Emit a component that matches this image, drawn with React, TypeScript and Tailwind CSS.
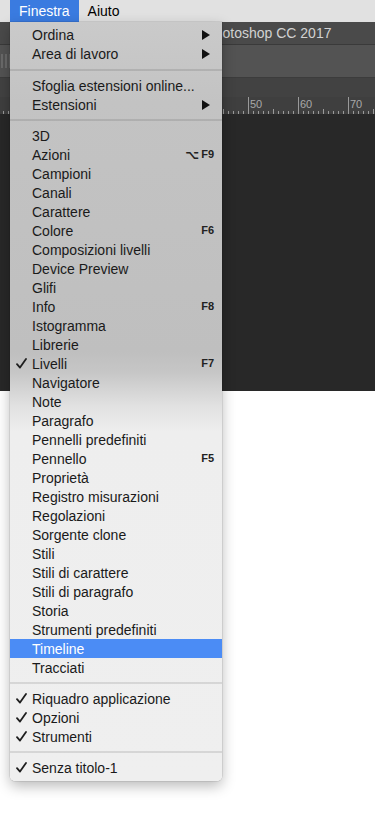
import React from "react"

type Item =
  | { sep: true }
  | {
      sep?: false
      label: string
      check?: boolean
      key?: string
      alt?: boolean
      sub?: boolean
      active?: boolean
    }

const items: Item[] = [
  { label: "Ordina", sub: true },
  { label: "Area di lavoro", sub: true },
  { sep: true },
  { label: "Sfoglia estensioni online..." },
  { label: "Estensioni", sub: true },
  { sep: true },
  { label: "3D" },
  { label: "Azioni", key: "F9", alt: true },
  { label: "Campioni" },
  { label: "Canali" },
  { label: "Carattere" },
  { label: "Colore", key: "F6" },
  { label: "Composizioni livelli" },
  { label: "Device Preview" },
  { label: "Glifi" },
  { label: "Info", key: "F8" },
  { label: "Istogramma" },
  { label: "Librerie" },
  { label: "Livelli", check: true, key: "F7" },
  { label: "Navigatore" },
  { label: "Note" },
  { label: "Paragrafo" },
  { label: "Pennelli predefiniti" },
  { label: "Pennello", key: "F5" },
  { label: "Proprietà" },
  { label: "Registro misurazioni" },
  { label: "Regolazioni" },
  { label: "Sorgente clone" },
  { label: "Stili" },
  { label: "Stili di carattere" },
  { label: "Stili di paragrafo" },
  { label: "Storia" },
  { label: "Strumenti predefiniti" },
  { label: "Timeline", active: true },
  { label: "Tracciati" },
  { sep: true },
  { label: "Riquadro applicazione", check: true },
  { label: "Opzioni", check: true },
  { label: "Strumenti", check: true },
  { sep: true },
  { label: "Senza titolo-1", check: true },
]

function Ruler() {
  const ticks = []
  for (let x = -2; x < 375; x += 5) {
    const major = (x + 2) % 50 === 0
    const mid = (x + 2) % 25 === 0
    const h = major ? 17 : mid ? 5 : 3
    ticks.push(<line key={x} x1={x + 0.5} x2={x + 0.5} y1={17 - h} y2={17} stroke="#9a9a9a" strokeWidth="1" />)
  }
  const labels = [250, 300, 350].map((x) => (
    <text key={x} x={x} y="11" fill="#a8a8a8" fontSize="11" fontFamily="Liberation Sans, Arial, sans-serif">
      {x / 5}
    </text>
  ))
  return (
    <svg width="375" height="17" className="block">
      {ticks}
      {labels}
    </svg>
  )
}

function Check() {
  return (
    <svg width="11" height="11" viewBox="0 0 11 11" className="ml-[6px]">
      <path d="M1 6.2 L4 9.6 L10 1" fill="none" stroke="#1e1e1e" strokeWidth="1.8" strokeLinecap="round" strokeLinejoin="round" />
    </svg>
  )
}

function Row({ item }: { item: Exclude<Item, { sep: true }> }) {
  return (
    <div
      className={
        "flex h-[19px] items-center text-[14px] leading-none " +
        (item.active ? "bg-[#4b8cf5] text-white" : "text-[#1a1a1a]")
      }
    >
      <span className="flex w-[22px] items-center">{item.check && <Check />}</span>
      <span className="flex-1 whitespace-nowrap">{item.label}</span>
      {item.key && (
        <span className="flex items-center gap-[2px] pr-[8px] text-[11px] font-bold text-[#222]">
          {item.alt && <span className="font-['DejaVu_Sans',sans-serif] text-[12px] font-bold">⌥</span>}
          {item.key}
        </span>
      )}
      {item.sub && (
        <svg width="8" height="10" viewBox="0 0 8 10" className="mr-[12px]">
          <path d="M0 0 L8 5 L0 10 Z" fill="#111" />
        </svg>
      )}
    </div>
  )
}

function Menu() {
  let sepCount = 0
  return (
    <div className="absolute left-[10px] top-[22px] w-[212px] rounded-b-[5px] bg-[linear-gradient(to_bottom,#cacaca_0px,#c3c3c3_80px,#bfbfbf_330px,#c6c6c6_350px,#e2e2e2_385px,#eeeeee_410px,#efefef_100%)] pt-[3px] pb-[4px] shadow-[0_5px_14px_rgba(0,0,0,0.28),0_0_0_0.5px_rgba(0,0,0,0.15)]">
      {items.map((item, i) => {
        if (item.sep) {
          sepCount++
          return (
            <div key={i} className={"flex items-center " + (sepCount === 1 ? "h-[13px]" : "h-[12px]")}>
              <div className="h-[2px] w-full bg-black/10" />
            </div>
          )
        }
        return <Row key={i} item={item} />
      })}
    </div>
  )
}

export default function App() {
  return (
    <div className="relative h-[826px] w-[375px] overflow-hidden bg-white font-['Liberation_Sans',Arial,sans-serif]">
      <div className="flex h-[22px] items-center bg-[#e1e1e1] text-[14px] text-black">
        <div className="ml-[10px] flex h-full items-center bg-[#3a7be0] px-[9px] text-white">Finestra</div>
        <div className="ml-[9px]">Aiuto</div>
      </div>

      <div className="flex h-[369px] flex-col bg-[#282828]">
        <div className="flex h-[23px] items-center border-b border-[#3a3a3a] bg-[#4a4a4a] pl-[161px] text-[14px] text-[#d2d2d2]">
          Adobe Photoshop CC 2017
        </div>
        <div className="flex h-[33px] items-center border-b border-[#3c3c3c] bg-[#535353]">
          <div className="ml-[1px] flex h-[14px] gap-[2px]">
            <div className="w-[2px] bg-[#6a6a6a]" />
            <div className="w-[2px] bg-[#6a6a6a]" />
            <div className="w-[2px] bg-[#6a6a6a]" />
          </div>
        </div>
        <div className="h-[19px] bg-[#424242]" />
        <div className="bg-[#3f3f3f]">
          <Ruler />
        </div>
        <div className="flex-1 bg-[#282828]" />
      </div>

      <Menu />
    </div>
  )
}
